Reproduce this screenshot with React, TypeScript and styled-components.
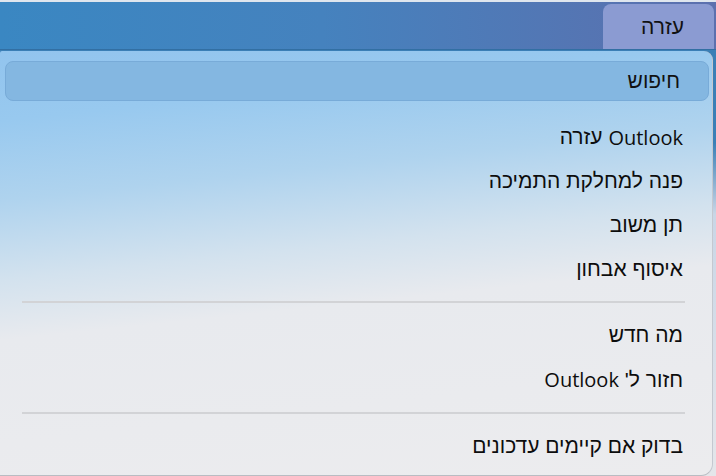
import styled, { createGlobalStyle } from "styled-components";

const GlobalStyle = createGlobalStyle`
  html, body {
    margin: 0;
    padding: 0;
    background: #3c84bf;
  }
  body {
    font-family: "Liberation Sans", "DejaVu Sans", Arial, sans-serif;
    overflow: hidden;
  }
`;

const Screen = styled.div`
  width: 716px;
  height: 476px;
  display: flex;
  flex-direction: column;
  direction: rtl;
  background: linear-gradient(180deg, #3b7fb6 0%, #3b7fb6 30%, #c9d6e6 45%, #e4e6ea 100%);
`;

const MenuBar = styled.div`
  height: 50px;
  box-sizing: border-box;
  display: flex;
  align-items: flex-end;
  padding-right: 2px;
  border-top: 2px solid #dfe6ee;
  border-bottom: 1px solid #326fa3;
  background: linear-gradient(90deg, #3a87c2 0%, #4582be 45%, #5674b2 85%, #5c70ae 100%);
`;

const MenuTitle = styled.div`
  width: 111px;
  height: 45px;
  box-sizing: border-box;
  display: flex;
  align-items: center;
  padding-right: 30px;
  border-radius: 8px 8px 0 0;
  background: #8b9bd2;
  color: #111;
  font-size: 21px;
`;

const Dropdown = styled.div`
  flex: 1;
  margin-top: 1px;
  margin-right: 3px;
  display: flex;
  flex-direction: column;
  border-radius: 2px 9px 12px 0;
  border-right: 1px solid #c4c8d0;
  border-bottom: 1px solid #b9bcc2;
  background: linear-gradient(
    174deg,
    #92c4ee 0%,
    #98c9ef 14%,
    #afd3ee 30%,
    #d3e2ee 46%,
    #e8eaee 58%,
    #ececee 100%
  );
`;

const SearchBox = styled.div`
  height: 40px;
  margin: 10px 3px 0 5px;
  box-sizing: border-box;
  display: flex;
  align-items: center;
  padding-right: 28px;
  border: 1px solid #78abd8;
  border-radius: 8px;
  background: #84b7e1;
  color: #111;
  font-size: 21px;
`;

const Group = styled.div<{ $first?: boolean }>`
  display: flex;
  flex-direction: column;
  margin-top: ${({ $first }) => ($first ? "14px" : "0")};
`;

const Item = styled.div<{ $height?: number }>`
  height: ${({ $height }) => $height ?? 44}px;
  display: flex;
  align-items: center;
  padding-right: 29px;
  color: #0d0d0d;
  font-size: 21px;
  white-space: nowrap;
`;

const Separator = styled.div`
  height: 2px;
  margin: 10px 27px 10px 22px;
  background: #d2d3d6;
`;

const Latin = styled.span`
  font-family: "Open Sans", "Liberation Sans", sans-serif;
  font-size: 20px;
`;

export default function App() {
  return (
    <>
      <GlobalStyle />
      <Screen>
        <MenuBar>
          <MenuTitle>עזרה</MenuTitle>
        </MenuBar>
        <Dropdown>
          <SearchBox>חיפוש</SearchBox>
          <Group $first>
            <Item>
              <Latin>Outlook</Latin>&nbsp;עזרה
            </Item>
            <Item>פנה למחלקת התמיכה</Item>
            <Item>תן משוב</Item>
            <Item>איסוף אבחון</Item>
          </Group>
          <Separator />
          <Group>
            <Item>מה חדש</Item>
            <Item $height={45}>
              חזור ל'&nbsp;<Latin>Outlook</Latin>
            </Item>
          </Group>
          <Separator />
          <Group>
            <Item>בדוק אם קיימים עדכונים</Item>
          </Group>
        </Dropdown>
      </Screen>
    </>
  );
}
